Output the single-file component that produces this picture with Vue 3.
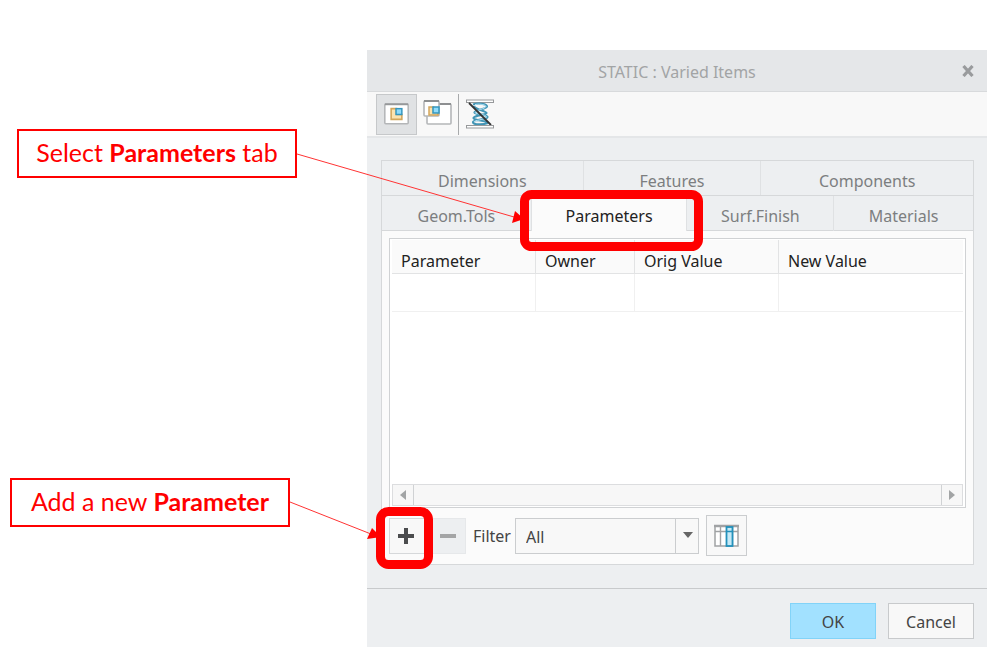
<template>
  <main class="page">
    <section class="dialog" role="dialog" aria-labelledby="dialog-title">
      <header class="titlebar">
        <h1 id="dialog-title" class="titlebar__text">STATIC : Varied Items</h1>
        <button class="titlebar__close" type="button" aria-label="Close">
          <svg width="12" height="12" viewBox="0 0 12 12">
            <path d="M1.5 1L10.5 11M10.5 1L1.5 11" stroke="#999b9d" stroke-width="3.2" />
          </svg>
        </button>
      </header>

      <div class="toolbar">
        <button class="tool tool--active" type="button" aria-label="Current model">
          <svg width="40" height="40" viewBox="0 0 40 40">
            <rect x="8" y="10" width="24" height="20" rx="1" fill="#fff" stroke="#b4b6b8" stroke-width="1.6" />
            <path d="M8 10H32" stroke="#96989a" stroke-width="2" />
            <path d="M14.5 14.5H20V20.5H25.5V25.5H14.5Z" fill="#fbe3b0" stroke="#d3a75c" stroke-width="1.6" />
            <rect x="19.5" y="14.5" width="6" height="6" fill="#8fdcfb" stroke="#3596be" stroke-width="1.5" />
          </svg>
        </button>
        <button class="tool" type="button" aria-label="All models">
          <svg width="40" height="40" viewBox="0 0 40 40">
            <rect x="9" y="10" width="24" height="20" rx="1" fill="#fff" stroke="#b4b6b8" stroke-width="1.6" />
            <path d="M9 10H33" stroke="#8d8f91" stroke-width="2" />
            <rect x="6" y="7" width="15" height="15" rx="1" fill="#fff" stroke="#b4b6b8" stroke-width="1.6" />
            <path d="M6 7H21" stroke="#8d8f91" stroke-width="2" />
            <path d="M11 13H15.5V18H20V21H11Z" fill="#fbe3b0" stroke="#d3a75c" stroke-width="1.5" />
            <rect x="15" y="13" width="6" height="6" fill="#8fdcfb" stroke="#3596be" stroke-width="1.5" />
          </svg>
        </button>
        <span class="toolbar__line"></span>
        <button class="tool" type="button" aria-label="Flexible spring">
          <svg width="40" height="40" viewBox="0 0 40 40">
            <rect x="6.5" y="6" width="27" height="2.5" fill="#fff" stroke="#97999b" />
            <path d="M13 10.500C19 8.500 27 10 27 12.500C27 15 15 16 14.500 18.500C14.500 21 27 20 27.500 23C27.500 26 13 25 13 28C13 31 23 31 28 29M14 12C14 15 26 17 26.500 19C26 21 14 21.500 13.500 24C14 27 26 26 28 29" fill="none" stroke="#4295b5" stroke-width="2.200" />
            <path d="M15 10.500C21 9.500 26 11 26 12.500C25 15 16 16 15 18.500C16 20.500 26 20 26.500 23C25 26 14 26 14 28" fill="none" stroke="#b7e5f6" stroke-width="1" />
            <path d="M9 9L31 31" stroke="#333" stroke-width="1.8" />
            <rect x="6.5" y="31.500" width="27" height="2.5" fill="#fff" stroke="#97999b" />
          </svg>
        </button>
      </div>

      <div class="body">
        <div class="panel">
          <nav class="tabs tabs--top">
            <button v-for="tab in topTabs" :key="tab" class="tab" type="button">{{ tab }}</button>
          </nav>
          <nav class="tabs tabs--bottom">
            <button
              v-for="tab in bottomTabs"
              :key="tab"
              class="tab"
              :class="{ 'tab--active': tab === activeTab }"
              type="button"
              @click="activeTab = tab"
            >{{ tab }}</button>
          </nav>

          <div class="content">
            <div class="grid">
              <table class="table">
                <colgroup>
                  <col class="col-parameter" />
                  <col class="col-owner" />
                  <col class="col-orig" />
                  <col />
                </colgroup>
                <thead>
                  <tr>
                    <th v-for="c in columns" :key="c">{{ c }}</th>
                  </tr>
                </thead>
                <tbody>
                  <tr>
                    <td v-for="c in columns" :key="c"></td>
                  </tr>
                </tbody>
              </table>
              <div class="scroll">
                <button class="scroll__btn" type="button" aria-label="Scroll left">
                  <svg width="8" height="12" viewBox="0 0 8 12"><path d="M7 1V11L1 6Z" fill="#a2a4a5" /></svg>
                </button>
                <div class="scroll__track"></div>
                <button class="scroll__btn" type="button" aria-label="Scroll right">
                  <svg width="8" height="12" viewBox="0 0 8 12"><path d="M1 1V11L7 6Z" fill="#a2a4a5" /></svg>
                </button>
              </div>
            </div>

            <div class="actions">
              <button class="btn-add" type="button" aria-label="Add">
                <svg width="16" height="16" viewBox="0 0 16 16"><path d="M8 0V16M0 8H16" stroke="#4b4c4e" stroke-width="4" /></svg>
              </button>
              <button class="btn-remove" type="button" aria-label="Remove" disabled>
                <svg width="16" height="16" viewBox="0 0 16 16"><path d="M0 8H16" stroke="#a4a5a6" stroke-width="4" /></svg>
              </button>
              <label class="filter-label" for="filter">Filter</label>
              <div class="combo">
                <select id="filter" v-model="filter" class="combo__select">
                  <option>All</option>
                </select>
                <span class="combo__arrow">
                  <svg width="12" height="7" viewBox="0 0 12 7"><path d="M1 0H11L6 6Z" fill="#666" /></svg>
                </span>
              </div>
              <button class="btn-columns" type="button" aria-label="Table columns">
                <svg width="26" height="24" viewBox="0 0 26 24">
                  <rect x="1" y="2" width="23" height="20" fill="#fff" stroke="#a0a2a4" stroke-width="1.5" />
                  <path d="M0 2H25" stroke="#a0a2a4" stroke-width="2.5" />
                  <path d="M1 7.5H24M6.5 3V22M18.5 3V22" stroke="#a0a2a4" stroke-width="1.4" />
                  <rect x="12.5" y="3" width="6" height="19" fill="#c6e9f6" stroke="#2391bb" stroke-width="1.8" />
                  <path d="M12.5 7.5H18.5" stroke="#2391bb" stroke-width="1.5" />
                </svg>
              </button>
            </div>
          </div>
        </div>
      </div>

      <footer class="footer">
        <button class="btn btn--ok" type="button">OK</button>
        <button class="btn" type="button">Cancel</button>
      </footer>
    </section>

    <!-- annotations over the dialog -->
    <p class="callout callout--tab">Select <b>Parameters</b> tab</p>
    <p class="callout callout--add">Add a new <b>Parameter</b></p>
    <svg class="arrows" width="720" height="600" viewBox="0 0 720 600">
      <path d="M297 154L514 217M290 502L371 534" stroke="#f33" fill="none" />
      <path d="M515 211L524 219L512 223ZM372 528L381 537L367 539Z" fill="#f00" />
      <rect x="524.5" y="194.5" width="174" height="52" rx="7" fill="none" stroke="#f00" stroke-width="9" />
      <rect x="380.5" y="511.5" width="48" height="53" rx="8" fill="none" stroke="#f00" stroke-width="9" />
    </svg>
  </main>
</template>

<script setup>
import { ref } from 'vue'

const topTabs = ['Dimensions', 'Features', 'Components']
const bottomTabs = ['Geom.Tols', 'Parameters', 'Surf.Finish', 'Materials']
const columns = ['Parameter', 'Owner', 'Orig Value', 'New Value']

const activeTab = ref('Parameters')
const filter = ref('All')
</script>

<style>
body {
  margin: 0;
  background: #fff;
}
</style>

<style scoped>
* {
  box-sizing: border-box;
}

.page {
  position: relative;
  padding: 50px 12px 7px 367px;
  font-family: 'Noto Sans', 'Open Sans', sans-serif;
  font-size: 16px;
  line-height: 24px;
  color: #444;
}

button,
select {
  margin: 0;
  padding: 0;
  font: inherit;
  color: inherit;
  border: 0;
  border-radius: 0;
  background: none;
}

button {
  display: flex;
  align-items: center;
  justify-content: center;
}

.dialog {
  background: #edeff1;
}

.titlebar {
  display: flex;
  align-items: center;
  height: 42px;
  padding: 0 13px;
  background: #e5e7e9;
  border-bottom: 1px solid #d8dadc;
}

.titlebar__text {
  flex: 1;
  margin: 0;
  padding: 2px 0 0 12px;
  font-size: 16px;
  font-weight: 400;
  text-align: center;
  color: #a2a4a5;
}

.toolbar {
  display: flex;
  align-items: center;
  height: 46px;
  padding: 0 9px;
  background: #f8f8f8;
  border-bottom: 2px solid #e4e6e8;
}

.tool {
  width: 41px;
  height: 41px;
}

.tool--active {
  background: #e0e2e4;
  border: 1px solid #c6c8ca;
}

.toolbar__line {
  width: 1px;
  height: 41px;
  background: #a8aaac;
}

.body {
  padding: 22px 13px 23px 14px;
}

.panel {
  border: 1px solid #d6d8da;
}

.tabs {
  display: grid;
  height: 35px;
  border-bottom: 1px solid #d6d8da;
}

.tabs--top {
  grid-template-columns: 202fr 178fr 212fr;
}

.tabs--bottom {
  grid-template-columns: 150fr 156fr 147fr 139fr;
}

.tab {
  padding-top: 6px;
  color: #7c7e80;
  border-right: 1px solid #dfe1e3;
}

.tabs--bottom .tab {
  padding-top: 5px;
}

.tab:last-child {
  border-right: 0;
}

.tabs .tab--active {
  height: 35px;
  color: #222;
  background: #fbfbfb;
}

.content {
  padding: 7px 7px 8px;
  background: #fbfbfb;
}

.grid {
  display: flex;
  flex-direction: column;
  justify-content: space-between;
  min-height: 270px;
  padding: 1px 2px;
  background: #fff;
  border: 1px solid #d0d2d4;
}

.table {
  width: 100%;
  border-collapse: separate;
  border-spacing: 0;
  table-layout: fixed;
}

.col-parameter {
  width: 144px;
}

.col-owner {
  width: 99px;
}

.col-orig {
  width: 144px;
}

.table th {
  height: 34px;
  padding: 9px 9px 0;
  font-weight: 400;
  text-align: left;
  color: #222;
  background: #fafafa;
  border-right: 1px solid #e2e3e4;
  border-bottom: 1px solid #e2e3e4;
}

.table td {
  height: 38px;
  padding: 0;
  border-right: 1px solid #f0f0f0;
  border-bottom: 1px solid #f0f0f0;
}

.table th:last-child,
.table td:last-child {
  border-right: 0;
}

.scroll {
  display: flex;
  height: 22px;
  background: #f7f7f7;
  border: 1px solid #dcdddf;
}

.scroll__btn {
  width: 20px;
}

.scroll__track {
  flex: 1;
  border: solid #d0d2d4;
  border-width: 0 1px;
}

.actions {
  display: flex;
  align-items: center;
  padding-top: 7px;
}

.btn-add,
.btn-remove {
  width: 36px;
  height: 36px;
  background: #f8f8f8;
  border: 1px solid #d6d8da;
}

.btn-add {
  padding-right: 2px;
}

.btn-remove {
  margin-left: 5px;
  background: #edeff1;
  border-color: #e6e8ea;
}

.filter-label {
  width: 49px;
  padding-left: 7px;
}

.combo {
  position: relative;
  width: 184px;
  height: 36px;
}

.combo__select {
  width: 100%;
  height: 100%;
  padding: 2px 30px 0 10px;
  appearance: none;
  background: #f8f8f8;
  border: 1px solid #cbcdcf;
}

.combo__arrow {
  position: absolute;
  top: 0;
  right: 0;
  bottom: 0;
  display: flex;
  align-items: center;
  justify-content: center;
  width: 24px;
  border-left: 1px solid #cbcdcf;
  pointer-events: none;
}

.btn-columns {
  width: 41px;
  height: 41px;
  margin-left: 7px;
  background: #f8f8f8;
  border: 1px solid #cbcdcf;
}

.footer {
  display: flex;
  justify-content: flex-end;
  gap: 12px;
  padding: 14px 13px 8px;
  border-top: 1px solid #c8cacc;
}

.btn {
  width: 86px;
  height: 36px;
  padding-top: 2px;
  background: #f8f8f8;
  border: 1px solid #c8cacc;
}

.btn--ok {
  background: #a2e1ff;
  border-color: #82d3f8;
}

.callout {
  position: absolute;
  width: 280px;
  height: 49px;
  margin: 0;
  font-family: Lato, sans-serif;
  font-size: 25px;
  line-height: 42px;
  text-align: center;
  white-space: nowrap;
  color: #f00;
  background: #fff;
  border: 2px solid #f00;
}

.callout--tab {
  top: 129px;
  left: 17px;
}

.callout--add {
  top: 478px;
  left: 10px;
}

.arrows {
  position: absolute;
  top: 0;
  left: 0;
  pointer-events: none;
}
</style>
